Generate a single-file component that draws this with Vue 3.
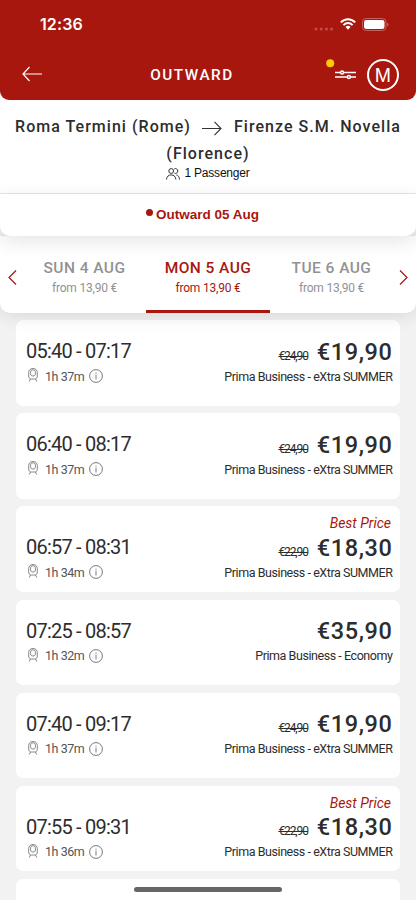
<script setup>
const days = [
  { label: 'SUN 4 AUG', price: 'from 13,90 €' },
  { label: 'MON 5 AUG', price: 'from 13,90 €', active: true },
  { label: 'TUE 6 AUG', price: 'from 13,90 €' },
]
const summer = 'Prima Business - eXtra SUMMER'
const trains = [
  { time: '05:40 - 07:17', length: '1h 37m', old: '€24,90', price: '€19,90', fare: summer },
  { time: '06:40 - 08:17', length: '1h 37m', old: '€24,90', price: '€19,90', fare: summer },
  { time: '06:57 - 08:31', length: '1h 34m', old: '€22,90', price: '€18,30', fare: summer, best: true },
  { time: '07:25 - 08:57', length: '1h 32m', price: '€35,90', fare: 'Prima Business - Economy' },
  { time: '07:40 - 09:17', length: '1h 37m', old: '€24,90', price: '€19,90', fare: summer },
  { time: '07:55 - 09:31', length: '1h 36m', old: '€22,90', price: '€18,30', fare: summer, best: true },
]
</script>

<template>
  <div class="screen">
    <header class="top">
      <div class="status">
        <span class="clock">12:36</span>
        <div class="signals">
          <svg class="dots" width="20" height="4" viewBox="0 0 20 4"><g fill="#c24c44"><circle cx="2" cy="2" r="1.6" /><circle cx="7.2" cy="2" r="1.6" /><circle cx="12.4" cy="2" r="1.6" /><circle cx="17.6" cy="2" r="1.6" /></g></svg>
          <svg class="wifi" width="16" height="12" viewBox="0 0 16 12" fill="none" stroke="#fff" stroke-width="2"><path d="M.8 4.4C4.8.1 11.2.1 15.2 4.4" /><path d="M3.4 7.1c2.6-2.7 6.6-2.7 9.2 0" /><path d="M5.5 8.9c1.4-1.4 3.6-1.4 5 0L8 11.7z" fill="#fff" stroke="none" /></svg>
          <svg class="battery" width="27" height="13" viewBox="0 0 27 13"><rect x=".5" y=".5" width="23.5" height="12" rx="3.6" fill="none" stroke="#c9625b" /><rect x="2" y="2" width="20.5" height="9" rx="2.3" fill="#fff" /><path d="M25.3 4.5c1.6.6 1.6 3.4 0 4z" fill="#cf6e67" /></svg>
        </div>
      </div>
      <div class="bar">
        <svg width="21" height="16" viewBox="0 0 21 16" fill="none" stroke="#fff" stroke-width="1.2"><path d="M20 8H1M7.5 1L1 8l6.5 7" /></svg>
        <h1>OUTWARD</h1>
        <div class="actions">
          <svg width="30" height="26" viewBox="0 0 30 26" fill="none" stroke="#fff" stroke-width="1.5"><circle cx="4.2" cy="4.2" r="4" fill="#ffc800" stroke="none" /><path d="M9 13.4h5.5m3.2 0H30M9 18.100h12.300m3.200 0H30" /><circle cx="16.100" cy="13.400" r="1.500" /><circle cx="22.900" cy="18.100" r="1.500" /></svg>
          <span class="avatar">M</span>
        </div>
      </div>
    </header>

    <section class="trip">
      <div class="route">
        Roma Termini (Rome)<svg class="to" width="20" height="15" viewBox="0 0 20 15" fill="none" stroke="#333" stroke-width="1.1"><path d="M0 7.5h19M12.5.8l6.5 6.7-6.5 6.7" /></svg>Firenze S.M. Novella<br />(Florence)
      </div>
      <div class="passengers">
        <svg width="14" height="12" viewBox="0 0 14 12" fill="none" stroke="#333"><circle cx="5.2" cy="3" r="2.4" /><path d="M.5 11.5C.8 8.5 2.5 6.9 5.2 6.9s4.400 1.600 4.700 4.600M8.300.8c1.800-.8 3.500.4 3.500 2.200S10.100 6 8.500 5.200M10.300 6.900c1.900.3 3 2 3.200 4.600" /></svg>
        <span>1 Passenger</span>
      </div>
    </section>

    <section class="leg"><i></i><span>Outward 05 Aug</span></section>

    <nav class="dates">
      <svg class="chev" width="9" height="15" viewBox="0 0 9 15" fill="none" stroke="#a7170e" stroke-width="1.2"><path d="M8 .5L1 7.5l7 7" /></svg>
      <div class="days">
        <div v-for="d in days" :key="d.label" class="day" :class="{ active: d.active }">
          <b>{{ d.label }}</b>
          <span>{{ d.price }}</span>
        </div>
      </div>
      <svg class="chev" width="9" height="15" viewBox="0 0 9 15" fill="none" stroke="#a7170e" stroke-width="1.2"><path d="M1 .5l7 7-7 7" /></svg>
    </nav>

    <main class="list">
      <article v-for="t in trains" :key="t.time" class="card" :class="{ best: t.best }">
        <div v-if="t.best" class="tag">Best Price</div>
        <div class="row main-row">
          <span class="time">{{ t.time }}</span>
          <span class="prices"><s v-if="t.old">{{ t.old }}</s><strong>{{ t.price }}</strong></span>
        </div>
        <div class="row info-row">
          <span class="duration">
            <svg class="train" width="10" height="14" viewBox="0 0 10 14" fill="none" stroke="#606060" stroke-width=".75"><path d="M5 .5C2.2.5.7 2.3.7 4.6v3.5c0 1.800 1 2.900 2.600 2.900h3.400c1.600 0 2.600-1.100 2.600-2.900V4.600C9.300 2.300 7.800.5 5 .5zM2.500 11L1.200 13.600M7.500 11l1.300 2.600" /><path d="M5 1.800c-1.700 0-2.400 1-2.400 2.400v1.700C2.600 7.300 3.400 8 5 8s2.400-.7 2.400-2.100V4.200C7.400 2.800 6.700 1.800 5 1.800z" /></svg>
            <span class="len">{{ t.length }}</span>
            <svg width="14" height="14" viewBox="0 0 14 14" fill="none" stroke="#555" stroke-width=".8"><circle cx="7" cy="7" r="6.4" /><path d="M7 5.700v4.800M7 3.600v1.100" /></svg>
          </span>
          <span class="fare">{{ t.fare }}</span>
        </div>
      </article>
      <div class="card"></div>
    </main>
    <div class="home"></div>
  </div>
</template>

<style>
body { background: #f2f2f2; }
</style>

<style scoped>
* { box-sizing: border-box; }
svg { display: block; flex: none; }
.screen { position: relative; width: 416px; height: 900px; overflow: hidden; background: #f2f2f2; font-family: Roboto, sans-serif; color: #2d2d2d; display: flex; flex-direction: column; }
.top { height: 100px; flex: none; background: #fff; position: relative; z-index: 0; }
.top::before { content: ''; position: absolute; inset: 0; z-index: -1; background: #a7170e; border-radius: 0 0 9px 9px; }
.status { height: 48px; padding: 0 27px 0 40px; display: flex; justify-content: space-between; align-items: center; }
.clock { font: 600 16px/20px Inter, sans-serif; color: #fff; letter-spacing: .1px; }
.signals { display: flex; align-items: center; }
.dots { margin: 9px 6px 0 0; }
.wifi { margin-right: 6px; }
.bar { height: 52px; padding: 0 17px 0 22px; display: flex; align-items: center; justify-content: space-between; }
h1 { margin: 1px 0 0 15px; font: 500 15.3px/20px Roboto, sans-serif; letter-spacing: 1.5px; color: #fff; }
.actions { display: flex; gap: 11px; align-items: center; }
.actions svg { margin-top: -4px; }
.avatar { width: 32px; height: 32px; margin-top: 2px; border: 2px solid #fff; border-radius: 50%; color: #fff; font: 19.5px/29px "Liberation Sans", sans-serif; text-align: center; }
.trip { height: 94px; flex: none; background: #fff; border-bottom: 1.5px solid #e6e6e6; padding-top: 13px; text-align: center; }
.route { font-size: 16px; line-height: 27px; font-weight: 500; letter-spacing: 1.03px; white-space: nowrap; }
.to { display: inline-block; margin: 0 12px 0 11px; vertical-align: -4px; }
.passengers { display: flex; justify-content: center; align-items: center; gap: 4px; font: 12px/13px "Liberation Sans", sans-serif; letter-spacing: -.2px; color: #111; }
.leg { position: relative; z-index: 2; height: 41.5px; flex: none; background: #fff; border-radius: 0 0 10px 10px; box-shadow: 0 5px 20px rgba(0,0,0,.11); display: flex; justify-content: center; align-items: center; gap: 3px; font: bold 13.5px/16px "Liberation Sans", sans-serif; color: #a7170e; padding-right: 11px; }
.leg i { width: 7px; height: 7px; margin-top: -4px; border-radius: 50%; background: currentColor; }
.dates { position: relative; z-index: 1; height: 77.5px; flex: none; background: #fff; border-radius: 0 0 10px 10px; box-shadow: 0 3px 18px rgba(0,0,0,.11); display: flex; justify-content: space-between; padding: 0 8px; }
.chev { margin-top: 34px; }
.days { flex: 1; display: flex; justify-content: center; }
.day { flex: none; width: 123.5px; padding-top: 22px; display: flex; flex-direction: column; align-items: center; color: #929292; }
.day b { font-size: 15.5px; line-height: 21px; font-weight: 500; letter-spacing: .45px; }
.day span { font-size: 12px; line-height: 18px; letter-spacing: -.2px; }
.day.active { color: #a7170e; border-bottom: 3px solid #a7170e; }
.list { padding: 7px 16px 0; display: flex; flex-direction: column; gap: 7.7px; }
.card { height: 85.5px; flex: none; background: #fff; border-radius: 7px; padding: 16px 7.5px 0 10px; }
.row { display: flex; justify-content: space-between; align-items: center; white-space: nowrap; }
.main-row { height: 30px; }
.info-row { height: 20px; }
.time { font-size: 20px; letter-spacing: -.78px; }
.prices { display: flex; align-items: baseline; padding-top: 1px; }
.prices s { font-size: 12px; letter-spacing: -1.1px; margin-right: 9px; }
.prices strong { font-size: 23.5px; line-height: 30px; font-weight: 500; letter-spacing: .6px; }
.duration { display: flex; align-items: center; color: #555; padding-left: 2px; }
.train { margin-top: -2px; }
.len { font-size: 12.5px; margin: 0 5px 0 7px; letter-spacing: -.45px; }
.fare { font-size: 12.5px; letter-spacing: -.44px; }
.best { padding-top: 6px; }
.tag { height: 20px; line-height: 22px; text-align: right; padding-right: 1.5px; font-size: 14px; font-style: italic; color: #a7170e; }
.home { position: absolute; left: 134px; bottom: 8px; width: 148px; height: 5px; border-radius: 3px; background: #666; z-index: 3; }
</style>
